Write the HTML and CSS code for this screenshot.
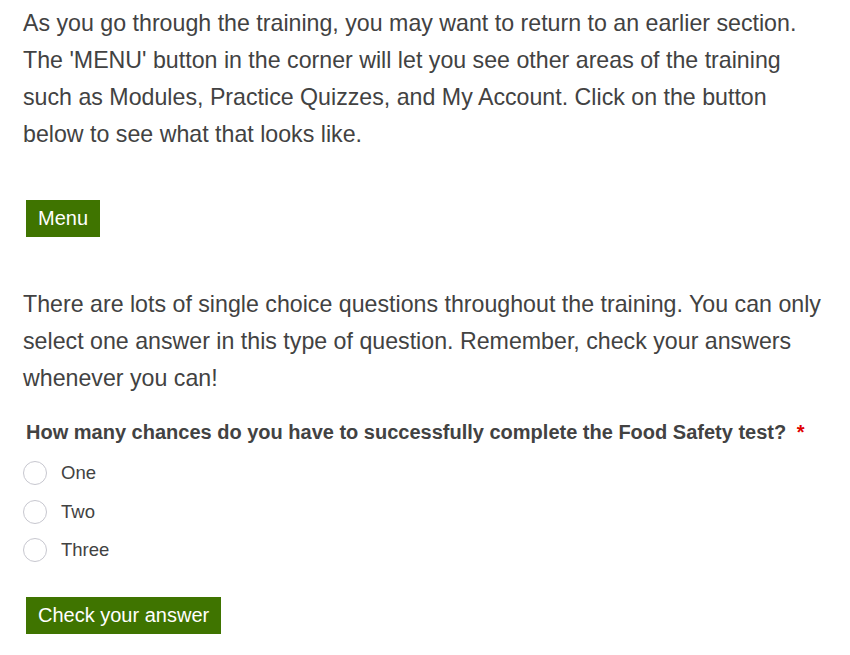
FILE: index.html
```html
<!DOCTYPE html>
<html lang="en">
<head>
    <meta charset="UTF-8">
    <meta name="viewport" content="width=device-width, initial-scale=1.0">
    <title>Training</title>
    <link rel="stylesheet" href="styles.css">
</head>
<body>
<div class="container">
    <p class="text">As you go through the training, you may want to return to an earlier section. The 'MENU' button in the corner will let you see other areas of the training such as Modules, Practice Quizzes, and My Account. Click on the button below to see what that looks like.</p>

    <button class="button menu-button">Menu</button>

    <p class="text second">There are lots of single choice questions throughout the training. You can only select one answer in this type of question. Remember, check your answers whenever you can!</p>

    <div class="question">
        <div class="question-title">How many chances do you have to successfully complete the Food Safety test? <span class="required">*</span></div>

        <label class="option"><input type="radio" name="chances"><span class="radio"></span>One</label>
        <label class="option"><input type="radio" name="chances"><span class="radio"></span>Two</label>
        <label class="option"><input type="radio" name="chances"><span class="radio"></span>Three</label>
    </div>

    <button class="button check-button">Check your answer</button>
</div>
</body>
</html>
```

FILE: styles.css
```css
body {
    font-family: "Liberation Sans", Arial, sans-serif;
    margin: 0;
    padding: 0;
    color: #424242;
    background: #fff;
}

.container {
    padding: 5px 23px 0 23px;
}

.text {
    font-size: 23.2px;
    line-height: 37px;
    margin: 0;
}

.text.second {
    margin-top: 49px;
}

.button {
    display: block;
    font-family: "Liberation Sans", Arial, sans-serif;
    background-color: #3f7400;
    color: #fff;
    border: none;
    border-radius: 0;
    cursor: pointer;
    height: 37px;
    padding: 0 12px;
    margin-left: 3px;
}

.menu-button {
    font-size: 20px;
    margin-top: 47px;
}

.check-button {
    font-size: 20px;
    margin-top: 27px;
}

.question {
    margin-top: 24px;
}

.question-title {
    font-size: 20px;
    font-weight: bold;
    margin-left: 3px;
    margin-bottom: 10px;
}

.required {
    color: #e00000;
    margin-left: 5px;
}

.option {
    display: flex;
    align-items: center;
    font-size: 18.5px;
    height: 38.5px;
    cursor: pointer;
}

.option input {
    display: none;
}

.radio {
    width: 22px;
    height: 22px;
    border: 1px solid #c7c7cf;
    border-radius: 50%;
    margin-right: 14px;
    box-sizing: content-box;
}
```
